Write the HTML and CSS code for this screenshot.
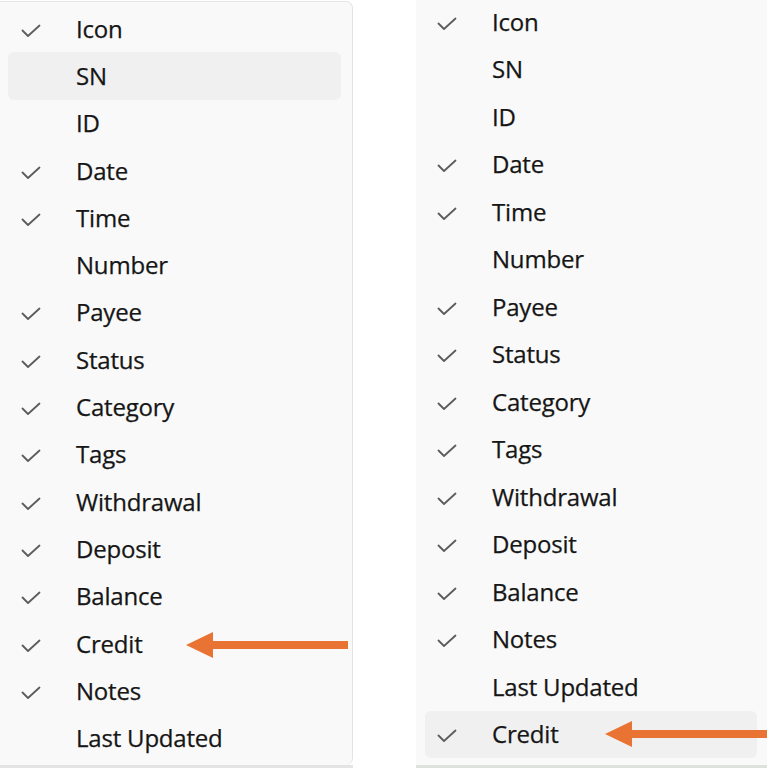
FILE: index.html
```html
<!DOCTYPE html>
<html>
<head>
<meta charset="utf-8">
<link rel="stylesheet" href="styles.css">
</head>
<body>
<div class="stage">
  <div class="col col-left">
    <div class="menu menu-left">
      <div class="item"><span class="chk"><svg viewBox="0 0 20 14"><path d="M1.5 6.5 L7 12 L18.5 1.5"/></svg></span><span class="lbl">Icon</span></div>
      <div class="item hover"><span class="chk"></span><span class="lbl">SN</span></div>
      <div class="item"><span class="chk"></span><span class="lbl">ID</span></div>
      <div class="item"><span class="chk"><svg viewBox="0 0 20 14"><path d="M1.5 6.5 L7 12 L18.5 1.5"/></svg></span><span class="lbl">Date</span></div>
      <div class="item"><span class="chk"><svg viewBox="0 0 20 14"><path d="M1.5 6.5 L7 12 L18.5 1.5"/></svg></span><span class="lbl">Time</span></div>
      <div class="item"><span class="chk"></span><span class="lbl">Number</span></div>
      <div class="item"><span class="chk"><svg viewBox="0 0 20 14"><path d="M1.5 6.5 L7 12 L18.5 1.5"/></svg></span><span class="lbl">Payee</span></div>
      <div class="item"><span class="chk"><svg viewBox="0 0 20 14"><path d="M1.5 6.5 L7 12 L18.5 1.5"/></svg></span><span class="lbl">Status</span></div>
      <div class="item"><span class="chk"><svg viewBox="0 0 20 14"><path d="M1.5 6.5 L7 12 L18.5 1.5"/></svg></span><span class="lbl">Category</span></div>
      <div class="item"><span class="chk"><svg viewBox="0 0 20 14"><path d="M1.5 6.5 L7 12 L18.5 1.5"/></svg></span><span class="lbl">Tags</span></div>
      <div class="item"><span class="chk"><svg viewBox="0 0 20 14"><path d="M1.5 6.5 L7 12 L18.5 1.5"/></svg></span><span class="lbl">Withdrawal</span></div>
      <div class="item"><span class="chk"><svg viewBox="0 0 20 14"><path d="M1.5 6.5 L7 12 L18.5 1.5"/></svg></span><span class="lbl">Deposit</span></div>
      <div class="item"><span class="chk"><svg viewBox="0 0 20 14"><path d="M1.5 6.5 L7 12 L18.5 1.5"/></svg></span><span class="lbl">Balance</span></div>
      <div class="item"><span class="chk"><svg viewBox="0 0 20 14"><path d="M1.5 6.5 L7 12 L18.5 1.5"/></svg></span><span class="lbl">Credit</span></div>
      <div class="item"><span class="chk"><svg viewBox="0 0 20 14"><path d="M1.5 6.5 L7 12 L18.5 1.5"/></svg></span><span class="lbl">Notes</span></div>
      <div class="item"><span class="chk"></span><span class="lbl">Last Updated</span></div>
    </div>
    <div class="strip"></div>
    <svg class="arrow arrow-left" viewBox="0 0 162 26"><path d="M0 13 L27 0 L27 9 L162 9 L162 17 L27 17 L27 26 Z"/></svg>
  </div>
  <div class="col col-right">
    <div class="menu menu-right">
      <div class="item"><span class="chk"><svg viewBox="0 0 20 14"><path d="M1.5 6.5 L7 12 L18.5 1.5"/></svg></span><span class="lbl">Icon</span></div>
      <div class="item"><span class="chk"></span><span class="lbl">SN</span></div>
      <div class="item"><span class="chk"></span><span class="lbl">ID</span></div>
      <div class="item"><span class="chk"><svg viewBox="0 0 20 14"><path d="M1.5 6.5 L7 12 L18.5 1.5"/></svg></span><span class="lbl">Date</span></div>
      <div class="item"><span class="chk"><svg viewBox="0 0 20 14"><path d="M1.5 6.5 L7 12 L18.5 1.5"/></svg></span><span class="lbl">Time</span></div>
      <div class="item"><span class="chk"></span><span class="lbl">Number</span></div>
      <div class="item"><span class="chk"><svg viewBox="0 0 20 14"><path d="M1.5 6.5 L7 12 L18.5 1.5"/></svg></span><span class="lbl">Payee</span></div>
      <div class="item"><span class="chk"><svg viewBox="0 0 20 14"><path d="M1.5 6.5 L7 12 L18.5 1.5"/></svg></span><span class="lbl">Status</span></div>
      <div class="item"><span class="chk"><svg viewBox="0 0 20 14"><path d="M1.5 6.5 L7 12 L18.5 1.5"/></svg></span><span class="lbl">Category</span></div>
      <div class="item"><span class="chk"><svg viewBox="0 0 20 14"><path d="M1.5 6.5 L7 12 L18.5 1.5"/></svg></span><span class="lbl">Tags</span></div>
      <div class="item"><span class="chk"><svg viewBox="0 0 20 14"><path d="M1.5 6.5 L7 12 L18.5 1.5"/></svg></span><span class="lbl">Withdrawal</span></div>
      <div class="item"><span class="chk"><svg viewBox="0 0 20 14"><path d="M1.5 6.5 L7 12 L18.5 1.5"/></svg></span><span class="lbl">Deposit</span></div>
      <div class="item"><span class="chk"><svg viewBox="0 0 20 14"><path d="M1.5 6.5 L7 12 L18.5 1.5"/></svg></span><span class="lbl">Balance</span></div>
      <div class="item"><span class="chk"><svg viewBox="0 0 20 14"><path d="M1.5 6.5 L7 12 L18.5 1.5"/></svg></span><span class="lbl">Notes</span></div>
      <div class="item"><span class="chk"></span><span class="lbl">Last Updated</span></div>
      <div class="item hover"><span class="chk"><svg viewBox="0 0 20 14"><path d="M1.5 6.5 L7 12 L18.5 1.5"/></svg></span><span class="lbl">Credit</span></div>
    </div>
    <div class="strip strip-right"></div>
    <svg class="arrow arrow-right" viewBox="0 0 162 26"><path d="M0 13 L27 0 L27 9 L162 9 L162 17 L27 17 L27 26 Z"/></svg>
  </div>
</div>
</body>
</html>
```
FILE: styles.css
```css
html, body {
  margin: 0;
  padding: 0;
  background: #ffffff;
}
body {
  width: 767px;
  height: 768px;
  overflow: hidden;
  font-family: "Open Sans", "Noto Sans", sans-serif;
  color: #161616;
}
.stage {
  display: flex;
  gap: 63px;
  height: 768px;
}
.col {
  position: relative;
  display: flex;
  flex-direction: column;
}
.col-left {
  width: 353px;
}
.col-right {
  width: 351px;
}
.menu {
  background: #f9f9f9;
  box-sizing: border-box;
  height: 765px;
  display: flex;
  flex-direction: column;
}
.menu-left {
  margin-top: 1px;
  height: 764px;
  border-top: 1px solid #e6e6e6;
  border-right: 1px solid #e3e3e3;
  border-radius: 0 7px 7px 0;
  padding: 3px 11px 0 8px;
}
.menu-right {
  padding: 0 10px 0 9px;
  margin-top: -2px;
  height: 767px;
}
.item {
  display: flex;
  align-items: center;
  border-radius: 6px;
  flex: none;
}
.menu-left .item {
  height: 47.3px;
}
.menu-right .item {
  height: 47.5px;
}
.item.hover {
  background: #f0f0f0;
}
.chk {
  width: 20px;
  height: 14px;
  flex: none;
  display: flex;
  margin-top: 4px;
}
.menu-left .chk {
  margin-left: 13px;
}
.menu-right .chk {
  margin-left: 12px;
}
.chk svg {
  width: 20px;
  height: 14px;
  fill: none;
  stroke: #5c5c5c;
  stroke-width: 1.8;
  stroke-linecap: round;
  stroke-linejoin: round;
}
.lbl {
  margin-left: 35px;
  font-size: 24px;
  letter-spacing: -0.2px;
  line-height: 1;
  white-space: nowrap;
  -webkit-text-stroke: 0.25px #161616;
}
.strip {
  height: 3px;
  background: #e4e4e4;
}
.strip-right {
  background: #dde2dd;
}
.arrow {
  position: absolute;
  width: 162px;
  height: 26px;
  fill: #e97332;
}
.arrow-left {
  left: 186px;
  top: 632px;
}
.arrow-right {
  left: 189px;
  top: 721px;
}
```
